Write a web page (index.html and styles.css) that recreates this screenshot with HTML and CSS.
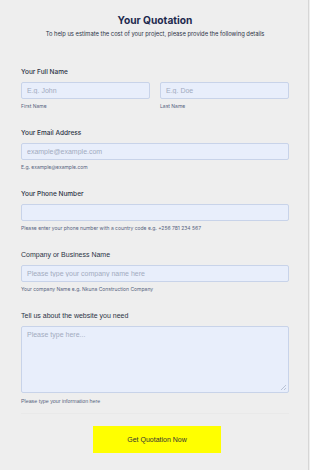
FILE: index.html
```html
<!DOCTYPE html>
<html>

<head>
    <meta charset="utf-8" />
    <meta name="viewport" content="width=device-width, initial-scale=1.0">
    <title>Your Quotation</title>
    <link rel="stylesheet" href="styles.css">
</head>

<body>
    <div class="page">
        <form class="quote-form">
            <div class="form-header">
                <h1 class="form-title">Your Quotation</h1>
                <p class="form-subtitle">To help us estimate the cost of your project, please provide the following details</p>
            </div>

            <div class="field">
                <label class="field-label">Your Full Name</label>
                <div class="name-row">
                    <div class="name-col">
                        <input type="text" class="text-input" placeholder="E.g. John">
                        <span class="sub-label">First Name</span>
                    </div>
                    <div class="name-col">
                        <input type="text" class="text-input" placeholder="E.g. Doe">
                        <span class="sub-label">Last Name</span>
                    </div>
                </div>
            </div>

            <div class="field">
                <label class="field-label">Your Email Address</label>
                <input type="email" class="text-input alt-font" placeholder="example@example.com">
                <span class="sub-label">E.g. example@example.com</span>
            </div>

            <div class="field">
                <label class="field-label">Your Phone Number</label>
                <input type="tel" class="text-input">
                <span class="sub-label">Please enter your phone number with a country code e.g. +256 781 234 567</span>
            </div>

            <div class="field">
                <label class="field-label alt-font">Company or Business Name</label>
                <input type="text" class="text-input alt-font" placeholder="Please type your company name here">
                <span class="sub-label">Your company Name e.g. Nkuna Construction Company</span>
            </div>

            <div class="field field-last">
                <label class="field-label alt-font">Tell us about the website you need</label>
                <textarea class="text-area alt-font" placeholder="Please type here..."></textarea>
                <span class="sub-label alt-font big-sub">Please type your information here</span>
            </div>

            <div class="form-footer">
                <button type="submit" class="submit-btn">Get Quotation Now</button>
            </div>
        </form>
    </div>
</body>

</html>
```

FILE: styles.css
```css
/* Nền trang */
body {
    margin: 0;
    background-color: #eeeeee;
    font-family: Inter, "Liberation Sans", sans-serif;
    color: #2c3345;
}

.page {
    width: 308px;
    min-height: 470px;
    border-right: 1px solid #d6d6d6;
}

.quote-form {
    padding: 0 19px 0 21px;
}

/* Tiêu đề */
.form-header {
    text-align: center;
    padding-top: 13px;
    height: 54px;
}

.form-title {
    margin: 0;
    font-size: 10.2px;
    font-weight: 700;
    line-height: 15px;
    color: #1e2a4f;
}

.form-subtitle {
    margin: 2px 0 0;
    font-size: 5.8px;
    line-height: 8px;
    color: #2c3345;
}

/* Các trường nhập */
.field {
    display: flex;
    flex-direction: column;
    height: 61px;
}

.field-label {
    font-size: 6.5px;
    font-weight: 500;
    line-height: 10px;
    margin-bottom: 5px;
    color: #2c3345;
}

.alt-font {
    font-family: "Liberation Sans", Arial, sans-serif;
    font-size: 7px;
}

.name-row {
    display: flex;
    gap: 10px;
}

.name-col {
    flex: 1;
    display: flex;
    flex-direction: column;
}

.text-input,
.text-area {
    box-sizing: border-box;
    width: 100%;
    height: 17px;
    margin: 0;
    padding: 0 5px;
    background-color: #e8eefb;
    border: 1px solid #c8d3e9;
    border-radius: 2px;
    font-size: 7px;
    color: #2c3345;
}

.text-input::placeholder,
.text-area::placeholder {
    color: #a2abc0;
}

/* Ô văn bản với tay nắm nhạt ở góc */
.text-area {
    height: 67px;
    padding: 4px 5px;
    resize: none;
    background-image:
        linear-gradient(135deg, transparent 48%, #b9c3d6 48%, #b9c3d6 58%, transparent 58%),
        linear-gradient(135deg, transparent 75%, #b9c3d6 75%, #b9c3d6 88%, transparent 88%);
    background-repeat: no-repeat;
    background-size: 5px 5px;
    background-position: right 2px bottom 2px, right 2px bottom 2px;
}

.sub-label {
    margin-top: 4px;
    font-size: 5px;
    line-height: 7px;
    color: #57647e;
}

.big-sub {
    font-size: 5.3px;
    margin-top: 5px;
}

.field-last {
    height: 102px;
}

/* Nút gửi */
.form-footer {
    display: flex;
    justify-content: center;
    border-top: 1px solid #e9e9e9;
    padding: 12px 0 0 4px;
}

.submit-btn {
    width: 128px;
    height: 27px;
    background-color: #ffff00;
    border: none;
    border-radius: 0;
    font-family: "Liberation Sans", Arial, sans-serif;
    font-size: 7px;
    color: #333333;
    cursor: pointer;
}
```
